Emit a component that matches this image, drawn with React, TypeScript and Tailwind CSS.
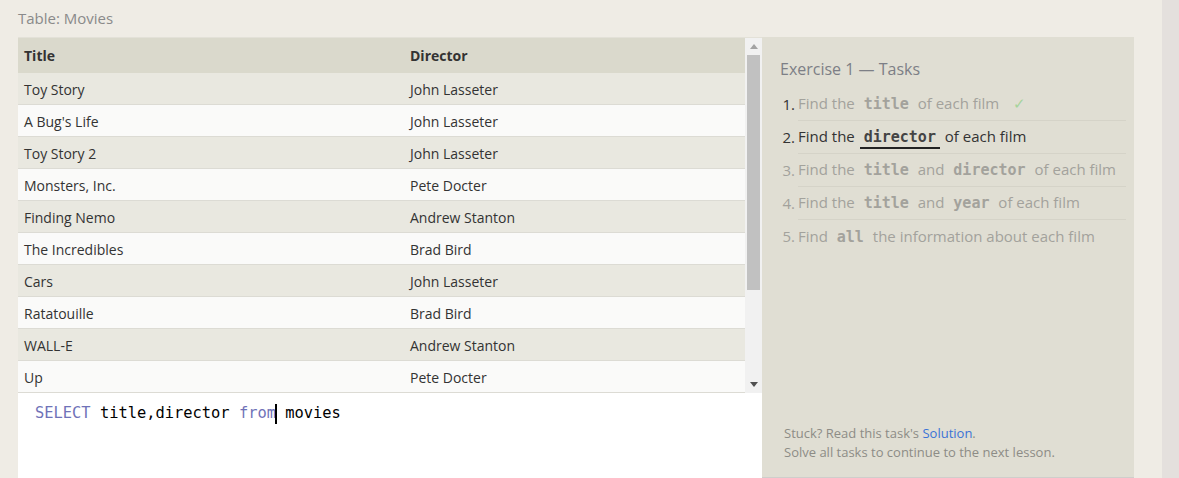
import React from "react";

const MOVIES: [string, string][] = [
  ["Toy Story", "John Lasseter"],
  ["A Bug's Life", "John Lasseter"],
  ["Toy Story 2", "John Lasseter"],
  ["Monsters, Inc.", "Pete Docter"],
  ["Finding Nemo", "Andrew Stanton"],
  ["The Incredibles", "Brad Bird"],
  ["Cars", "John Lasseter"],
  ["Ratatouille", "Brad Bird"],
  ["WALL-E", "Andrew Stanton"],
  ["Up", "Pete Docter"],
];

const sans = { fontFamily: '"Open Sans", "Noto Sans", sans-serif' };
const mono = { fontFamily: '"DejaVu Sans Mono", "Liberation Mono", monospace' };

function Code({ children, active }: { children: React.ReactNode; active?: boolean }) {
  return (
    <span
      className={
        "px-[4px] mx-[1px] font-bold text-[15px] " +
        (active ? "text-[#444] border-b-2 border-[#222] pb-[1px]" : "text-[#a3a29c]")
      }
      style={mono}
    >
      {children}
    </span>
  );
}

function Task({ n, state, children }: { n: number; state: "done" | "active" | "todo"; children: React.ReactNode }) {
  const color = state === "active" ? "text-[#333]" : "text-[#a3a29c]";
  return (
    <div className={"flex h-[33px] items-center text-[15px] " + color}>
      <span className={"w-[18px] shrink-0 text-right pr-[3px] " + (state === "todo" ? "" : "text-[#333]")}>{n}.</span>
      <div className={"flex-1 h-full flex items-center " + (n < 5 ? "border-b border-[#d5d3c8]" : "")}>
        <span className="whitespace-nowrap">{children}</span>
      </div>
    </div>
  );
}

export default function App() {
  return (
    <div className="w-[1179px] h-[478px] bg-[#efece5] flex overflow-hidden" style={sans}>
      <div className="flex-1 flex flex-col pl-[18px]">
        <div className="h-[37px] flex items-center text-[15px] text-[#8a8a8a] pb-[1px]">Table: Movies</div>
        <div className="flex flex-1 min-h-0">
          {/* left: table + editor */}
          <div className="w-[744px] flex flex-col">
            <div className="flex h-[356px] border-t border-[#e3e1d8]">
              <div className="flex-1 flex flex-col text-[14px] text-[#333]">
                <div className="flex h-[35px] items-center bg-[#dad9cc] font-bold">
                  <div className="w-[386px] pl-[6px]">Title</div>
                  <div className="flex-1 pl-[6px]">Director</div>
                </div>
                {MOVIES.map(([t, d], i) => (
                  <div
                    key={t}
                    className={
                      "flex h-[32px] items-center border-b border-[#dcdbd4] pt-[1px] " +
                      (i % 2 === 0 ? "bg-[#e9e8e0]" : "bg-[#fafaf9]")
                    }
                  >
                    <div className="w-[386px] pl-[6px]">{t}</div>
                    <div className="flex-1 pl-[6px]">{d}</div>
                  </div>
                ))}
              </div>
              {/* scrollbar */}
              <div className="w-[17px] bg-[#f1f1f1] flex flex-col items-center">
                <div className="h-[17px] flex items-center justify-center">
                  <svg width="8" height="5" viewBox="0 0 8 5"><path d="M4 0 L8 5 L0 5 Z" fill="#a3a3a3" /></svg>
                </div>
                <div className="w-[13px] h-[235px] bg-[#c1c1c1]" />
                <div className="flex-1" />
                <div className="h-[17px] flex items-center justify-center">
                  <svg width="8" height="5" viewBox="0 0 8 5"><path d="M0 0 L8 0 L4 5 Z" fill="#505050" /></svg>
                </div>
              </div>
            </div>
            <div className="flex-1 bg-white pl-[17px] pt-[9px] text-[15.4px] text-black" style={mono}>
              <span className="text-[#6f72b8]">SELECT</span> title,director <span className="text-[#6f72b8]">from</span>
              <span className="inline-block w-[2px] h-[20px] bg-black align-middle -ml-[1px] mr-[-1px]" /> movies
            </div>
          </div>
          {/* right: tasks */}
          <div className="w-[372px] flex flex-col bg-[#e0ded3] border-b border-[#cfcecb] pl-[18px] pr-[8px] pt-[20px]">
            <div className="text-[16px] text-[#7d7f86] leading-[24px]">Exercise 1 — Tasks</div>
            <div className="mt-[7px]">
              <Task n={1} state="done">
                Find the <Code>title</Code> of each film
                <span className="ml-[14px] text-[#a6d49c]">✓</span>
              </Task>
              <Task n={2} state="active">
                Find the <Code active>director</Code> of each film
              </Task>
              <Task n={3} state="todo">
                Find the <Code>title</Code> and <Code>director</Code> of each film
              </Task>
              <Task n={4} state="todo">
                Find the <Code>title</Code> and <Code>year</Code> of each film
              </Task>
              <Task n={5} state="todo">
                Find <Code>all</Code> the information about each film
              </Task>
            </div>
            <div className="mt-auto pb-[15px] pl-[4px] text-[13px] leading-[19px] text-[#8d8c86]">
              <div>
                Stuck? Read this task's <span className="text-[#3b73d6]">Solution</span>.
              </div>
              <div>Solve all tasks to continue to the next lesson.</div>
            </div>
          </div>
          <div className="w-[28px]" />
        </div>
      </div>
      <div className="w-[17px] bg-[#e4e0dd]" />
    </div>
  );
}
